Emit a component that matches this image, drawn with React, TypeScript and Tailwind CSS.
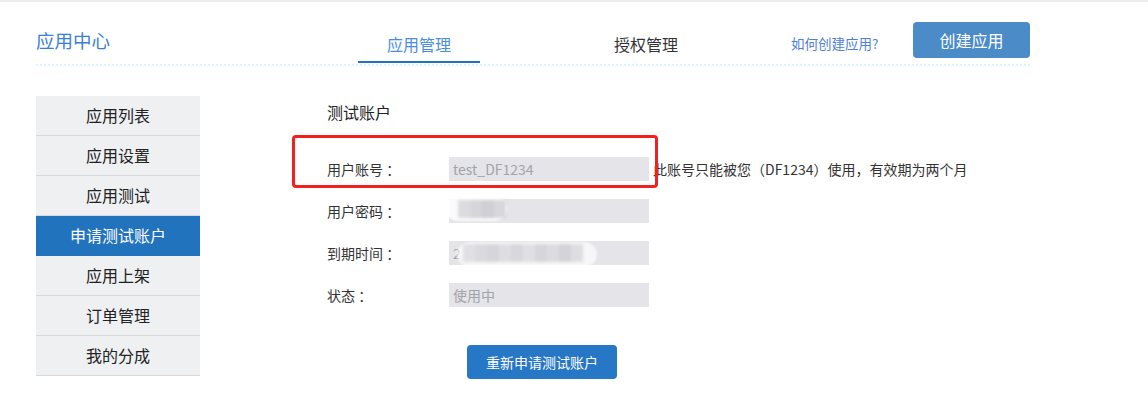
const sideItems = ["应用列表", "应用设置", "应用测试", "申请测试账户", "应用上架", "订单管理", "我的分成"];

function Blocks({ tones }: { tones: string[] }) {
  return (
    <div className="flex h-full blur-[1.5px]">
      {tones.map((t, i) => (
        <div key={i} className={`h-full w-[12px] ${t}`} />
      ))}
    </div>
  );
}

export default function App() {
  return (
    <div className="min-h-[417px] w-[1148px] border-t-2 border-[#ededed] bg-white font-['Noto_Sans_CJK_SC',sans-serif] text-[#333]">
      <div className="ml-[36px] w-[994px]">
        {/* header */}
        <div className="flex h-[64px] border-b-2 border-dotted border-[#dcf5fa]">
          <div className="w-[322px] pt-[26px] text-[18.5px] leading-[24px] text-[#3a80d6]">应用中心</div>
          <div className="h-[61px] w-[122px] border-b-2 border-[#2173c0] pt-[31px] text-center text-[16px] leading-[22px] text-[#4a8ee0]">
            应用管理
          </div>
          <div className="ml-[105px] h-[61px] w-[122px] pt-[31px] text-center text-[16px] leading-[22px] text-[#333]">
            授权管理
          </div>
          <div className="ml-[84px] pt-[31px] text-[13.5px] leading-[20px] text-[#4f80d8]">如何创建应用?</div>
          <button className="ml-auto mt-[20px] h-[36px] w-[117px] rounded-[4px] bg-[#4a8bc8] text-[16px] text-white">
            创建应用
          </button>
        </div>

        {/* main */}
        <div className="mt-[30px] flex">
          <div className="w-[164px]">
            {sideItems.map((item) => (
              <div
                key={item}
                className={`h-[40px] border-b text-center text-[16px] leading-[39px] ${
                  item === "申请测试账户"
                    ? "border-[#2173be] bg-[#2173be] text-white"
                    : "border-[#d9d9dc] bg-[#eff0f2] text-[#222]"
                }`}
              >
                {item}
              </div>
            ))}
          </div>

          <div className="relative ml-[127px]">
            <div className="h-[32px] text-[16px] leading-[32px] text-[#222]">测试账户</div>

            <div className="mt-[29px] flex flex-col gap-[18px] text-[14px]">
              <div className="flex h-[24px] items-center">
                <div className="w-[122px] text-[#333]">用户账号 ：</div>
                <div className="h-[24px] w-[200px] bg-[#e4e4e9] pl-[4px] leading-[24px] text-[#a3a3a8]">test_DF1234</div>
                <div className="ml-[4px] text-[#333]">此账号只能被您（DF1234）使用，有效期为两个月</div>
              </div>
              <div className="flex h-[24px] items-center">
                <div className="w-[122px] text-[#333]">用户密码 ：</div>
                <div className="relative h-[24px] w-[200px] bg-[#e4e4e9]">
                  <div className="absolute -left-[4px] -top-[4px] h-[26px] w-[62px] rounded-full bg-white/85 blur-[1px]" />
                  <div className="absolute left-[9px] top-[1px] h-[18px] w-[48px]">
                    <Blocks tones={["bg-[#dcdce0]", "bg-[#d6d6da]", "bg-[#cfcfd4]", "bg-[#d8d8dc]"]} />
                  </div>
                </div>
              </div>
              <div className="flex h-[24px] items-center">
                <div className="w-[122px] text-[#333]">到期时间 ：</div>
                <div className="relative h-[24px] w-[200px] bg-[#e4e4e9] pl-[4px] leading-[24px] text-[#a3a3a8]">
                  2
                  <div className="absolute left-[8px] top-[1px] h-[25px] w-[140px] rounded-full bg-white/70 blur-[1px]" />
                  <div className="absolute left-[14px] top-[3px] h-[18px] w-[120px]">
                    <Blocks
                      tones={[
                        "bg-[#e0e0e4]",
                        "bg-[#dadade]",
                        "bg-[#d6d6da]",
                        "bg-[#dedee2]",
                        "bg-[#d8d8dc]",
                        "bg-[#e0e0e4]",
                        "bg-[#d6d6da]",
                        "bg-[#dcdce0]",
                        "bg-[#d4d4d8]",
                        "bg-[#dedee2]",
                      ]}
                    />
                  </div>
                </div>
              </div>
              <div className="flex h-[24px] items-center">
                <div className="w-[122px] text-[#333]">状态 ：</div>
                <div className="h-[24px] w-[200px] bg-[#e4e4e9] pl-[4px] leading-[24px] text-[#a3a3a8]">使用中</div>
              </div>
            </div>

            <button className="ml-[140px] mt-[38px] h-[34px] w-[150px] rounded-[4px] bg-[#2677c5] text-[14px] text-white">
              重新申请测试账户
            </button>

            {/* red highlight */}
            <div className="absolute -left-[35px] top-[39px] h-[53px] w-[366px] rounded-[4px] border-[3px] border-[#f2201e]" />
          </div>
        </div>
      </div>
    </div>
  );
}
